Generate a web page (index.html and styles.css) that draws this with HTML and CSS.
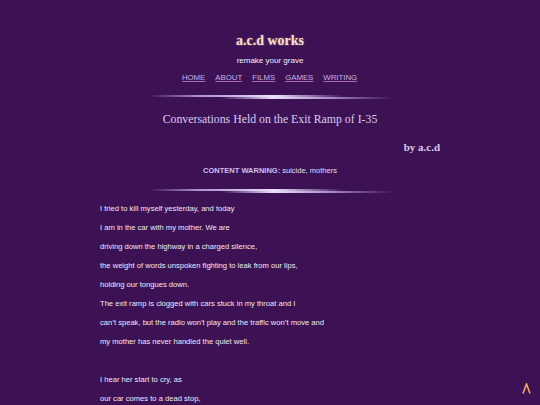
FILE: index.html
```html
<!DOCTYPE html>
<html lang="en">
<head>
<meta charset="utf-8">
<title>Conversations Held on the Exit Ramp of I-35</title>
<link rel="stylesheet" href="styles.css">
</head>
<body>
<header class="site-header">
  <h1 class="site-title">a.c.d works</h1>
  <p class="tagline">remake your grave</p>
  <nav class="nav">
    <a href="#">HOME</a>
    <a href="#">ABOUT</a>
    <a href="#">FILMS</a>
    <a href="#">GAMES</a>
    <a href="#">WRITING</a>
  </nav>
  <div class="rule"></div>
</header>
<main class="content">
  <h2 class="poem-title">Conversations Held on the Exit Ramp of I-35</h2>
  <p class="byline">by a.c.d</p>
  <p class="warning"><strong>CONTENT WARNING:</strong> suicide, mothers</p>
  <div class="rule"></div>
  <div class="poem">
    <p>I tried to kill myself yesterday, and today</p>
    <p>I am in the car with my mother. We are</p>
    <p>driving down the highway in a charged silence,</p>
    <p>the weight of words unspoken fighting to leak from our lips,</p>
    <p>holding our tongues down.</p>
    <p>The exit ramp is clogged with cars stuck in my throat and I</p>
    <p>can’t speak, but the radio won’t play and the traffic won’t move and</p>
    <p>my mother has never handled the quiet well.</p>
    <p class="gap"></p>
    <p>I hear her start to cry, as</p>
    <p>our car comes to a dead stop,</p>
  </div>
</main>
<a class="to-top" href="#" aria-label="back to top"><svg width="9" height="11" viewBox="0 0 9 11"><polyline points="1,10.5 4.5,1 8,10.5" fill="none" stroke="#f2a65a" stroke-width="1.6" stroke-linejoin="miter"/></svg></a>
</body>
</html>
```
FILE: styles.css
```css
html, body {
  margin: 0;
  padding: 0;
}
body {
  background: #3c1255;
  font-family: "Liberation Sans", Arial, sans-serif;
  color: #f1e8f6;
  min-height: 405px;
  overflow: hidden;
}
.site-header {
  display: flex;
  flex-direction: column;
  align-items: center;
  padding-top: 31px;
}
.site-title {
  margin: 0;
  font-family: "Liberation Serif", "Times New Roman", serif;
  font-weight: bold;
  font-size: 14px;
  line-height: 20px;
  color: #f7dfc8;
  text-shadow: 0 0 2px rgba(255, 210, 170, 0.5);
}
.tagline {
  margin: 3px 0 0;
  font-size: 8px;
  line-height: 14px;
  color: #f4eef8;
}
.nav {
  display: flex;
  gap: 9px;
  margin-top: 3px;
  font-size: 7.8px;
  line-height: 14px;
}
.nav a {
  color: #c9b2ea;
  text-decoration: underline;
  text-decoration-color: #a66da6;
  padding-right: 1px;
}
.rule {
  position: relative;
  width: 245px;
  height: 4px;
  margin: 10px auto 0;
}
.rule::before,
.rule::after {
  content: "";
  position: absolute;
  height: 1.5px;
  border-radius: 1px;
}
.rule::before {
  left: 0;
  right: 20%;
  top: 0;
  background: linear-gradient(90deg, rgba(210,185,245,0) 0%, rgba(210,185,245,0.75) 25%, #ece0ff 65%, rgba(225,205,255,0) 100%);
}
.rule::after {
  left: 30%;
  right: 0;
  top: 2px;
  background: linear-gradient(90deg, rgba(210,185,245,0) 0%, #ece0ff 30%, rgba(210,185,245,0.7) 65%, rgba(210,185,245,0) 100%);
}
.content {
  width: 340px;
  margin: 0 auto;
  display: flex;
  flex-direction: column;
}
.poem-title {
  margin: 10px 0 0;
  text-align: center;
  font-family: "Liberation Serif", "Times New Roman", serif;
  font-weight: normal;
  font-size: 11.8px;
  line-height: 20px;
  color: #dccbf0;
}
.byline {
  margin: 9px 0 0;
  text-align: right;
  font-family: "Liberation Serif", "Times New Roman", serif;
  font-weight: bold;
  font-size: 11px;
  line-height: 18px;
  color: #dccbf0;
}
.warning {
  margin: 8px 0 0;
  text-align: center;
  font-size: 7.5px;
  line-height: 14px;
  color: #e6dcf2;
}
.warning strong {
  color: #d2bff0;
}
.content .rule {
  margin-top: 11px;
}
.poem {
  margin-top: 6px;
}
.poem p {
  margin: 0;
  font-size: 7.6px;
  line-height: 19px;
  height: 19px;
  color: #f1e8f6;
}
.to-top {
  position: fixed;
  right: 9px;
  bottom: 11px;
  display: block;
  line-height: 0;
}
```
